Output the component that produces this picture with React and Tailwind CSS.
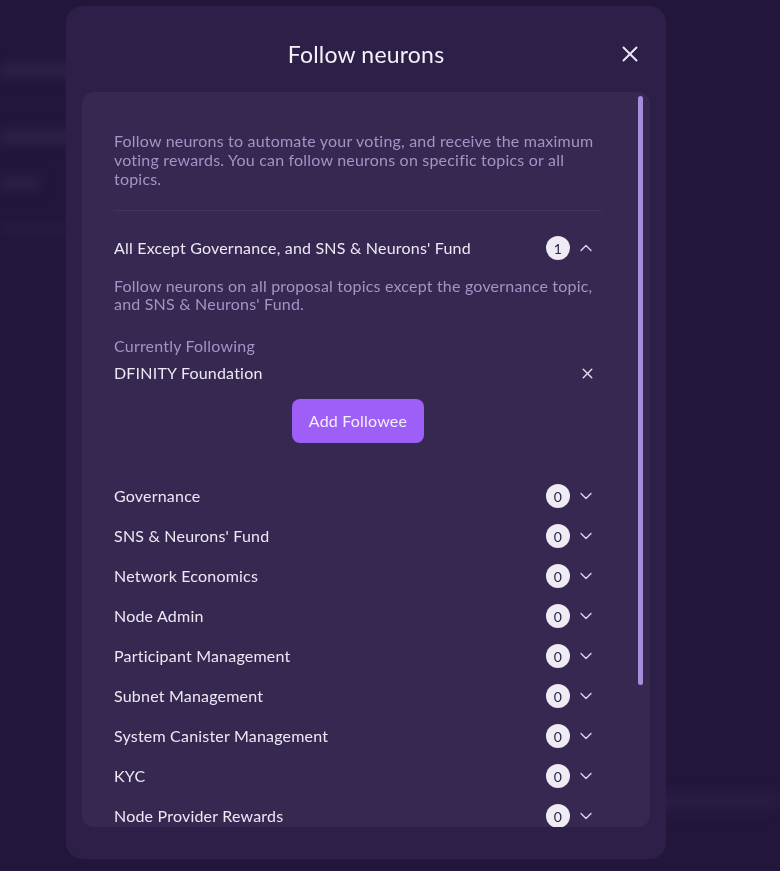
import { X, ChevronDown, ChevronUp } from "lucide-react";

const topics = [
  "Governance",
  "SNS & Neurons' Fund",
  "Network Economics",
  "Node Admin",
  "Participant Management",
  "Subnet Management",
  "System Canister Management",
  "KYC",
  "Node Provider Rewards",
];

function Badge({ count }) {
  return (
    <span className="w-6 h-6 rounded-full bg-[#efebf5] text-[#2a1f40] text-[14px] flex items-center justify-center">
      {count}
    </span>
  );
}

function TopicRow({ label, count }) {
  return (
    <div className="h-10 flex items-center justify-between shrink-0">
      <span className="text-[16px] tracking-[0.2px] text-[#ece8f4]">{label}</span>
      <div className="flex items-center gap-[6px] pr-[6px]">
        <Badge count={count} />
        <ChevronDown size={20} strokeWidth={1.7} className="text-[#d9d1e8]" />
      </div>
    </div>
  );
}

export default function App() {
  return (
    <div
      className="min-h-screen bg-[#22163b] overflow-hidden"
      style={{ fontFamily: "Lato, 'Liberation Sans', sans-serif" }}
    >
      {/* blurred page behind the backdrop */}
      <div className="flex flex-col pt-[64px]">
        <div className="h-3 w-[120px] bg-[#3a2c56] blur-[6px] opacity-60" />
        <div className="h-3 w-[110px] mt-[55px] bg-[#3a2c56] blur-[6px] opacity-60" />
        <div className="h-3 w-[40px] mt-[34px] bg-[#3a2c56] blur-[6px] opacity-50" />
        <div className="h-2 w-[90px] mt-[36px] bg-[#3a2c56] blur-[6px] opacity-30" />
        <div className="h-3 w-[140px] mt-[562px] ml-auto bg-[#3a2c56] blur-[8px] opacity-50" />
      </div>

      <div className="fixed inset-0 pt-[6px] pl-[66px]">
        <div className="w-[600px] h-[853px] bg-[#2d1f48] rounded-2xl flex flex-col px-4 pb-8">
          <div className="h-[86px] shrink-0 flex items-center justify-center relative">
            <h1 className="text-[23px] tracking-[0.2px] text-[#f4f1f9] mt-[10px]">Follow neurons</h1>
            <button className="absolute right-[7px] top-[35px] text-[#ebe6f3]">
              <X size={26} strokeWidth={1.8} />
            </button>
          </div>

          <div className="flex-1 min-h-0 bg-[#372851] rounded-xl overflow-hidden relative">
            <div className="absolute right-[7px] top-[4px] w-[5px] h-[589px] rounded-full bg-[#a88ddb]" />
            <div className="pl-8 pr-12 pt-[39px] flex flex-col tracking-[0.2px]">
              <p className="text-[16px] leading-[19px] text-[#a592c6]">
                Follow neurons to automate your voting, and receive the maximum voting
                rewards. You can follow neurons on specific topics or all topics.
              </p>
              <div className="h-px bg-[#43345e] mt-[22px]" />

              <div className="mt-[25px] h-6 flex items-center justify-between">
                <span className="text-[16px] text-[#ece8f4]">
                  All Except Governance, and SNS &amp; Neurons' Fund
                </span>
                <div className="flex items-center gap-[6px] pr-[6px]">
                  <Badge count={1} />
                  <ChevronUp size={20} strokeWidth={1.7} className="text-[#d9d1e8]" />
                </div>
              </div>
              <p className="mt-[17px] text-[16px] leading-[18px] text-[#a592c6]">
                Follow neurons on all proposal topics except the governance topic, and
                SNS &amp; Neurons' Fund.
              </p>
              <p className="mt-[23px] text-[16px] leading-5 text-[#a592c6]">
                Currently Following
              </p>
              <div className="mt-[7px] h-5 flex items-center justify-between">
                <span className="text-[16px] text-[#ece8f4]">DFINITY Foundation</span>
                <X size={17} strokeWidth={2} className="text-[#e3ddee] mr-[6px]" />
              </div>
              <div className="flex justify-center mt-[16px]">
                <button className="w-[132px] h-[44px] rounded-lg bg-[#9d5ff7] text-[16px] text-[#f3eefc]">
                  Add Followee
                </button>
              </div>

              <div className="mt-[33px] flex flex-col">
                {topics.map((t) => (
                  <TopicRow key={t} label={t} count={0} />
                ))}
              </div>
            </div>
          </div>
        </div>
      </div>
    </div>
  );
}
